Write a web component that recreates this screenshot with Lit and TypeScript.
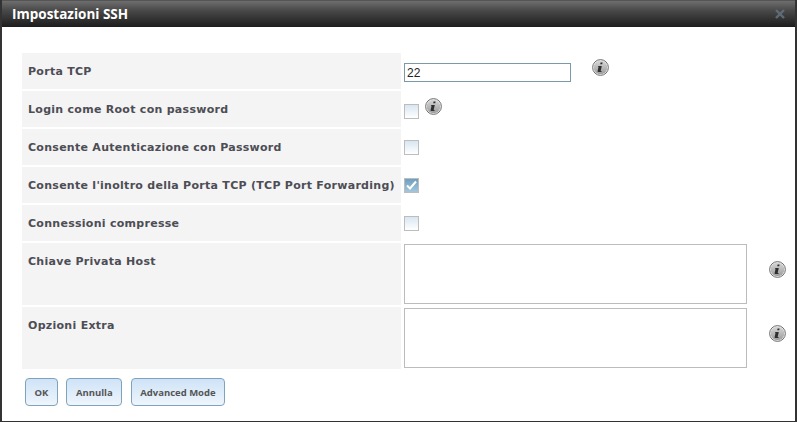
import { LitElement, html, css, svg } from "lit";
import { customElement } from "lit/decorators.js";

const infoIcon = html`<svg class="info" width="17" height="17" viewBox="0 0 17 17">
  <defs>
    <linearGradient id="ig" x1="0" y1="0" x2="0" y2="1">
      <stop offset="0" stop-color="#d6d6d6" />
      <stop offset="1" stop-color="#9c9c9c" />
    </linearGradient>
  </defs>
  <circle cx="8.5" cy="8.5" r="7.9" fill="#ececec" stroke="#707070" stroke-width="1" />
  <circle cx="8.5" cy="8.5" r="6.8" fill="url(#ig)" />
  ${svg`<path d="M8.6 3.4h2l-.4 1.9h-2zM6.6 7h3.2l-1.1 4.8c-.1.4.2.5.9.3l-.1.9H6.2c-.5 0-.7-.4-.6-.8l.9-4.1h-.8z" fill="#2e2e2e" />`}
</svg>`;

type Row = { label: string; kind: "text" | "check" | "area"; checked?: boolean; info?: "near" | "far" };

const rows: Row[] = [
  { label: "Porta TCP", kind: "text", info: "far" },
  { label: "Login come Root con password", kind: "check", info: "near" },
  { label: "Consente Autenticazione con Password", kind: "check" },
  { label: "Consente l'inoltro della Porta TCP (TCP Port Forwarding)", kind: "check", checked: true },
  { label: "Connessioni compresse", kind: "check" },
  { label: "Chiave Privata Host", kind: "area", info: "far" },
  { label: "Opzioni Extra", kind: "area", info: "far" },
];

@customElement("app-root")
export class AppRoot extends LitElement {
  static styles = css`
    :host {
      display: block;
      width: 797px;
      height: 422px;
      box-sizing: border-box;
      background: #fff;
      border: 1px solid #333;
      border-width: 0 2px 1px 2px;
      font-family: "DejaVu Sans", Verdana, sans-serif;
      overflow: hidden;
    }
    .title {
      height: 27px;
      box-sizing: border-box;
      display: flex;
      align-items: center;
      justify-content: space-between;
      padding: 0 10px 0 10px;
      border-top: 1px solid #555;
      background: linear-gradient(#6e6e6e, #4a4a4a 35%, #1c1c1c);
      color: #fff;
      font: bold 13.5px "Open Sans", Tahoma, sans-serif;
    }
    .close {
      display: block;
    }
    .body {
      padding: 26px 0 0 20px;
    }
    .row {
      display: flex;
      margin-bottom: 2px;
    }
    .label {
      flex: none;
      width: 373px;
      padding: 12px 0 0 6px;
      height: 24px;
      background: #f4f4f4;
      color: #4d4d55;
      font-size: 11px;
      font-weight: bold;
      letter-spacing: 0.28px;
      line-height: 13px;
      white-space: nowrap;
    }
    .row.tall .label {
      height: 50px;
    }
    .cell {
      flex: 1;
      display: flex;
      align-items: flex-start;
      padding-left: 3px;
      position: relative;
    }
    .field {
      width: 167px;
      height: 19px;
      box-sizing: border-box;
      margin-top: 10px;
      border: 1px solid #7b9aa8;
      padding: 1px 2px;
      font: 12px "Liberation Sans", Arial, sans-serif;
      color: #222;
      outline: none;
    }
    .box {
      appearance: none;
      flex: none;
      width: 15px;
      height: 15px;
      margin: 11px 0 0;
      box-sizing: border-box;
      border: 1px solid #bdbdbd;
      background: linear-gradient(#d8e6f2, #ffffff);
      position: relative;
    }
    .box.low {
      margin-top: 13px;
    }
    .box.on {
      background: linear-gradient(#6f9fbf, #a3c6dc);
    }
    .check {
      position: absolute;
      left: 3px;
      top: 11px;
      pointer-events: none;
    }
    textarea {
      display: block;
      flex: none;
      resize: none;
      width: 343px;
      height: 60px;
      box-sizing: border-box;
      margin-top: 1px;
      border: 1px solid #bcbcbc;
      background: #fff;
      outline: none;
    }
    .info {
      display: block;
      flex: none;
    }
    .info-near {
      margin: 7px 0 0 6px;
    }
    .info-far {
      margin: 6px 0 0 21px;
    }
    .area-info {
      margin: 18px 0 0 22px;
    }
    .actions {
      display: flex;
      gap: 8.5px;
      padding: 7px 0 0 3px;
    }
    button {
      height: 28px;
      box-sizing: border-box;
      padding: 0 8.5px;
      border: 1px solid #7fa3bd;
      border-radius: 4px;
      background: linear-gradient(#cfe3f7, #eef5fc);
      color: #555;
      font: bold 9.5px "Open Sans", Tahoma, sans-serif;
    }
  `;

  private renderControl(row: Row) {
    if (row.kind === "text") return html`<input class="field" type="text" value="22" />`;
    if (row.kind === "area") return html`<textarea></textarea>`;
    const cls = `box ${row.checked ? "on" : ""} ${row.info ? "low" : ""}`;
    return html`<input type="checkbox" class=${cls} ?checked=${row.checked} />
      ${row.checked
        ? html`<svg class="check" width="15" height="15" viewBox="0 0 15 15">
            <path d="M3 7.5l3 3 6-7" fill="none" stroke="#fff" stroke-width="2" />
          </svg>`
        : ""}`;
  }

  private renderInfo(row: Row) {
    if (!row.info) return "";
    const cls = row.kind === "area" ? "area-info" : row.info === "near" ? "info-near" : "info-far";
    return html`<span class=${cls}>${infoIcon}</span>`;
  }

  render() {
    return html`
      <div class="title">
        <span>Impostazioni SSH</span>
        <svg class="close" width="10" height="10" viewBox="0 0 10 10">
          <path d="M1 1l8 8M9 1l-8 8" stroke="#5f6c77" stroke-width="2.4" />
        </svg>
      </div>
      <div class="body">
        ${rows.map(
          (row) => html`<div class="row ${row.kind === "area" ? "tall" : ""}">
            <div class="label">${row.label}</div>
            <div class="cell">${this.renderControl(row)}${this.renderInfo(row)}</div>
          </div>`
        )}
        <div class="actions">
          <button>OK</button>
          <button>Annulla</button>
          <button>Advanced Mode</button>
        </div>
      </div>
    `;
  }
}
